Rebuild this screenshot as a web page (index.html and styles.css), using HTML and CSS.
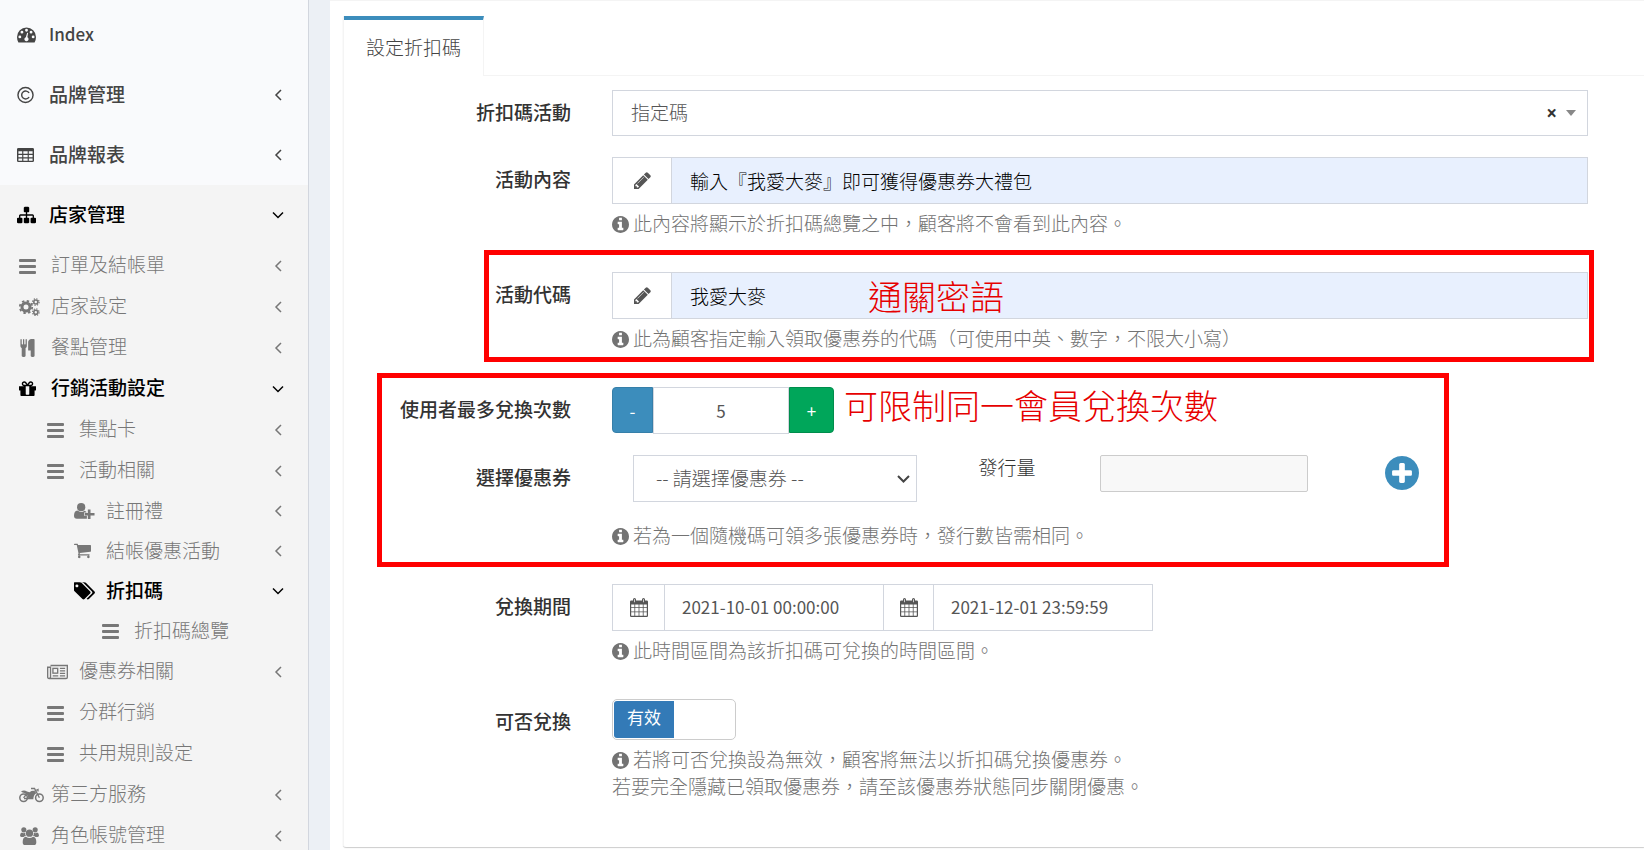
FILE: index.html
```
<!DOCTYPE html>
<html lang="zh-Hant">
  <head>
    <meta charset="UTF-8" />
    <meta name="viewport" content="width=device-width, initial-scale=1.0" />
    <title>設定折扣碼</title>
    <link rel="stylesheet" href="styles.css">
  </head>
  <body>
    <!-- icon sprite -->
    <svg class="sprite" aria-hidden="true">
      <symbol id="i-dashboard" viewBox="0 1 20 17">
        <path fill-rule="evenodd" d="M10 1.500A10 10 0 0 0 0 11.500Q0 14.500 1.500 17.500H18.500Q20 14.500 20 11.500A10 10 0 0 0 10 1.500ZM3 10a1.500 1.500 0 1 1 0 3a1.500 1.500 0 1 1 0-3ZM5.200 5a1.500 1.500 0 1 1 0 3a1.500 1.500 0 1 1 0-3ZM10 3a1.500 1.500 0 1 1 0 3a1.500 1.500 0 1 1 0-3ZM14.800 5a1.500 1.500 0 1 1 0 3a1.500 1.500 0 1 1 0-3ZM17 10a1.500 1.500 0 1 1 0 3a1.500 1.500 0 1 1 0-3ZM10.700 7.200L11.700 7.500L10.900 11.900A2.200 2.200 0 1 1 9.300 11.800Z"/>
      </symbol>
      <symbol id="i-copyright" viewBox="0 0 18 18">
        <g fill="none" stroke="currentColor" stroke-width="1.500"><circle cx="9" cy="9" r="8"/><path d="M12.800 6.900A4.200 4.200 0 1 0 12.800 11.100"/></g>
      </symbol>
      <symbol id="i-table" viewBox="0 0 18 18">
        <path fill-rule="evenodd" d="M1.500 1.500H16.500Q18 1.500 18 3V15Q18 16.500 16.500 16.500H1.500Q0 16.500 0 15V3Q0 1.500 1.500 1.500ZM1.500 5V7.700H5.500V5ZM6.700 5V7.700H11.300V5ZM12.500 5V7.700H16.500V5ZM1.500 8.900V11.400H5.500V8.900ZM6.700 8.900V11.400H11.300V8.900ZM12.500 8.900V11.400H16.500V8.900ZM1.500 12.600V15.100H5.500V12.600ZM6.700 12.600V15.100H11.300V12.600ZM12.500 12.600V15.100H16.500V12.600Z"/>
      </symbol>
      <symbol id="i-sitemap" viewBox="0 64 1792 1664">
        <path d="M1792 1248v320q0 40-28 68t-68 28h-320q-40 0-68-28t-28-68v-320q0-40 28-68t68-28h96v-192h-512v192h96q40 0 68 28t28 68v320q0 40-28 68t-68 28h-320q-40 0-68-28t-28-68v-320q0-40 28-68t68-28h96v-192h-512v192h96q40 0 68 28t28 68v320q0 40-28 68t-68 28h-320q-40 0-68-28t-28-68v-320q0-40 28-68t68-28h96v-192q0-52 38-90t90-38h512v-192h-96q-40 0-68-28t-28-68v-320q0-40 28-68t68-28h320q40 0 68 28t28 68v320q0 40-28 68t-68 28h-96v192h512q52 0 90 38t38 90v192h96q40 0 68 28t28 68z"/>
      </symbol>
      <symbol id="i-bars" viewBox="0 0 17 18">
        <rect y="2" width="17" height="3" rx="1"/><rect y="8" width="17" height="3" rx="1"/><rect y="14" width="17" height="3" rx="1"/>
      </symbol>
      <symbol id="i-cogs" viewBox="0 0 21 18">
        <g fill="none" stroke="currentColor">
          <circle cx="7" cy="9" r="4" stroke-width="3"/><circle cx="7" cy="9" r="6.200" stroke-width="1.800" stroke-dasharray="2.435"/>
          <circle cx="16.800" cy="4" r="2" stroke-width="1.600"/><circle cx="16.800" cy="4" r="3.300" stroke-width="1.200" stroke-dasharray="1.300"/>
          <circle cx="16.800" cy="14.200" r="2" stroke-width="1.600"/><circle cx="16.800" cy="14.200" r="3.300" stroke-width="1.200" stroke-dasharray="1.300"/>
        </g>
      </symbol>
      <symbol id="i-cutlery" viewBox="192 0 1408 1792">
        <path d="M832 64v640q0 61-35.500 111t-92.500 70v779q0 52-38 90t-90 38h-128q-52 0-90-38t-38-90v-779q-57-20-92.500-70t-35.500-111v-640q0-26 19-45t45-19 45 19 19 45v416q0 26 19 45t45 19 45-19 19-45v-416q0-26 19-45t45-19 45 19 19 45v416q0 26 19 45t45 19 45-19 19-45v-416q0-26 19-45t45-19 45 19 19 45zm768 0v1600q0 52-38 90t-90 38h-128q-52 0-90-38t-38-90v-512h-224q-13 0-22.500-9.500t-9.500-22.500v-800q0-132 94-226t226-94h256q26 0 45 19t19 45z"/>
      </symbol>
      <symbol id="i-gift" viewBox="128 128 1536 1536">
        <path d="M1056 1356v-716h-320v716q0 25 18 38.500t46 13.500h192q28 0 46-13.500t18-38.500zm-456-844h195l-126-161q-26-31-69-31-40 0-68 28t-28 68 28 68 68 28zm688-96q0-40-28-68t-68-28q-43 0-69 31l-125 161h194q40 0 68-28t28-68zm376 256v320q0 14-9 23t-23 9h-96v416q0 40-28 68t-68 28h-1088q-40 0-68-28t-28-68v-416h-96q-14 0-23-9t-9-23v-320q0-14 9-23t23-9h440q-93 0-158.500-65.500t-65.500-158.500 65.500-158.500 158.500-65.500q107 0 168 77l128 165 128-165q61-77 168-77 93 0 158.500 65.500t65.500 158.500-65.500 158.500-158.500 65.500h440q14 0 23 9t9 23z"/>
      </symbol>
      <symbol id="i-user-plus" viewBox="0 0 22 18">
        <circle cx="7.500" cy="5" r="4.300"/><path d="M3.500 8.500Q7.500 11.500 11 8.700Q12 8.800 12.500 9.700H13V10.500H10.500V14H13.500V17H3Q0 17 0 14Q0 9 3.500 8.500Z"/><path d="M14.500 7.500H17.300V11H21.500V13.700H17.300V17.500H14.500V13.700H11.200V11H14.500Z"/>
      </symbol>
      <symbol id="i-cart" viewBox="64 192 1664 1536">
        <path d="M704 1536q0 52-38 90t-90 38-90-38-38-90 38-90 90-38 90 38 38 90zm896 0q0 52-38 90t-90 38-90-38-38-90 38-90 90-38 90 38 38 90zm128-1088v512q0 24-16.500 42.500t-40.500 21.500l-1044 122q13 60 13 70 0 16-24 64h920q26 0 45 19t19 45-19 45-45 19h-1024q-26 0-45-19t-19-45q0-11 8-31.500t16-36 21.500-40 15.500-29.500l-177-823h-204q-26 0-45-19t-19-45 19-45 45-19h256q16 0 28.500 6.500t19.500 15.500 13 24.500 8 26 5.500 29.500 4.500 26h1201q26 0 45 19t19 45z"/>
      </symbol>
      <symbol id="i-tags" viewBox="0 128 1840 1536">
        <path d="M384 448q0-53-37.500-90.500t-90.500-37.500-90.500 37.500-37.500 90.500 37.500 90.500 90.500 37.500 90.500-37.500 37.500-90.500zm1067 576q0 53-37 90l-491 492q-39 37-91 37-53 0-90-37l-715-716q-38-37-64.500-101t-26.500-117v-416q0-52 38-90t90-38h416q53 0 117 26.500t102 64.500l715 714q37 39 37 91zm384 0q0 53-37 90l-491 492q-39 37-91 37-36 0-59-14t-53-45l470-470q37-37 37-90 0-52-37-91l-715-714q-38-38-102-64.500t-117-26.500h224q53 0 117 26.500t102 64.500l715 714q37 39 37 91z"/>
      </symbol>
      <symbol id="i-newspaper" viewBox="0 0 22 18">
        <g fill="none" stroke="currentColor" stroke-width="1.400"><path d="M3.700 2.200H21.300V14.500Q21.300 15.800 20 15.800H2.200Q.7 15.800 .7 14.200V4H3.700V14.200Q3.700 15.500 2.200 15.800"/><rect x="6.200" y="5.200" width="5" height="5"/><path d="M6 13H11.800M13.500 5.200H19M13.500 7.800H19M13.500 10.400H19M13.500 13H19"/></g>
      </symbol>
      <symbol id="i-motorcycle" viewBox="0 0 25 18">
        <g fill="none" stroke="currentColor"><circle cx="4.600" cy="11.800" r="3.800" stroke-width="1.500"/><circle cx="20.400" cy="11.800" r="3.800" stroke-width="1.500"/><path stroke-width="1.300" d="M4.600 11.800L7.500 8M12 2.500H15.500L20.400 11.800M15.500 5L19 3.500V5.500"/></g>
        <path d="M2 5.500Q5 3.700 8 5.500L10.500 6.200Q14 3.700 16.300 5.500L17.200 7.300Q14.500 9 14.300 13.300H5V11.700H9.300Q8.700 8.300 5.500 7Q3.500 6.500 2 5.500Z"/>
      </symbol>
      <symbol id="i-users" viewBox="0 0 20 19">
        <circle cx="4" cy="3" r="2.700"/><circle cx="16" cy="3" r="2.700"/><circle cx="10" cy="6.500" r="3.900"/>
        <path d="M2 5.700Q3.500 7 5.300 6.200Q5.200 8 6.200 9.400Q4.500 9.500 3.700 10.500H1.500Q0 10.500 0 9Q0 6 2 5.700ZM18 5.700Q16.500 7 14.700 6.200Q14.800 8 13.800 9.400Q15.500 9.500 16.300 10.500H18.500Q20 10.500 20 9Q20 6 18 5.700ZM6.200 10.200Q10 13 13.800 10.200Q17.200 10.500 17.200 16Q17.200 19 14.500 19H5.500Q2.800 19 2.800 16Q2.800 10.500 6.200 10.200Z"/>
      </symbol>
      <symbol id="i-pencil" viewBox="128 128 1536 1536">
        <path d="M491 1536l91-91-235-235-91 91v107h128v128h107zm523-928q0-22-22-22-10 0-17 7l-542 542q-7 7-7 17 0 22 22 22 10 0 17-7l542-542q7-7 7-17zm-54-192l416 416-832 832h-416v-416zm683 96q0 53-37 90l-166 166-416-416 166-165q36-38 90-38 53 0 91 38l235 234q37 39 37 91z"/>
      </symbol>
      <symbol id="i-info" viewBox="128 128 1536 1536">
        <path d="M1152 1376v-160q0-14-9-23t-23-9h-96v-512q0-14-9-23t-23-9h-320q-14 0-23 9t-9 23v160q0 14 9 23t23 9h96v320h-96q-14 0-23 9t-9 23v160q0 14 9 23t23 9h448q14 0 23-9t9-23zm-128-896v-160q0-14-9-23t-23-9h-192q-14 0-23 9t-9 23v160q0 14 9 23t23 9h192q14 0 23-9t9-23zm640 416q0 209-103 385.500t-279.500 279.500-385.500 103-385.500-103-279.500-279.500-103-385.500 103-385.500 279.500-279.500 385.500-103 385.500 103 279.500 279.500 103 385.500z"/>
      </symbol>
      <symbol id="i-plus-circle" viewBox="128 128 1536 1536">
        <path d="M1344 960v-128q0-26-19-45t-45-19h-256v-256q0-26-19-45t-45-19h-128q-26 0-45 19t-19 45v256h-256q-26 0-45 19t-19 45v128q0 26 19 45t45 19h256v256q0 26 19 45t45 19h128q26 0 45-19t19-45v-256h256q26 0 45-19t19-45zm320-64q0 209-103 385.500t-279.500 279.500-385.500 103-385.500-103-279.500-279.500-103-385.500 103-385.500 279.500-279.500 385.500-103 385.500 103 279.500 279.500 103 385.500z"/>
      </symbol>
      <symbol id="i-calendar" viewBox="0 0 18 19">
        <path fill-rule="evenodd" d="M1.200 2.500H3V1.500Q3 0 4.500 0Q6 0 6 1.500V2.500H12V1.500Q12 0 13.500 0Q15 0 15 1.500V2.500H16.800Q18 2.500 18 3.700V17.800Q18 19 16.800 19H1.200Q0 19 0 17.800V3.700Q0 2.500 1.200 2.500ZM1.200 6.500V9.200H4.400V6.500ZM5.200 6.500V9.200H8.600V6.500ZM9.400 6.500V9.200H12.800V6.500ZM13.600 6.500V9.200H16.800V6.500ZM1.200 10V13.500H4.400V10ZM5.200 10V13.500H8.600V10ZM9.400 10V13.500H12.800V10ZM13.600 10V13.500H16.800V10ZM1.200 14.300V17.800H4.400V14.300ZM5.200 14.300V17.800H8.600V14.300ZM9.400 14.300V17.800H12.800V14.300ZM13.600 14.300V17.800H16.800V14.300ZM4.200 1.300V4.300H4.900V1.300ZM13.200 1.300V4.300H13.900V1.300Z"/>
      </symbol>
      <symbol id="i-left" viewBox="0 0 10 12"><path fill="none" stroke="currentColor" stroke-width="1.500" d="M8 1L3 6L8 11"/></symbol>
      <symbol id="i-down" viewBox="0 0 12 12"><path fill="none" stroke="currentColor" stroke-width="1.500" d="M1 3.500L6 8.500L11 3.500"/></symbol>
      <symbol id="i-select" viewBox="0 0 13 13"><path fill="none" stroke="currentColor" stroke-width="2" d="M1 4L6.500 9.500L12 4"/></symbol>
    </svg>

    <div class="wrapper">
      <aside class="sidebar">
        <ul class="menu">
          <li><a href="#" class="home"><svg class="icon w19"><use href="#i-dashboard"/></svg><span>Index</span></a></li>
          <li><a href="#"><svg class="icon"><use href="#i-copyright"/></svg><span>品牌管理</span><svg class="arrow"><use href="#i-left"/></svg></a></li>
          <li><a href="#"><svg class="icon"><use href="#i-table"/></svg><span>品牌報表</span><svg class="arrow"><use href="#i-left"/></svg></a></li>
          <li class="active">
            <a href="#"><svg class="icon w19"><use href="#i-sitemap"/></svg><span>店家管理</span><svg class="arrow"><use href="#i-down"/></svg></a>
            <ul class="submenu">
              <li><a href="#"><svg class="icon"><use href="#i-bars"/></svg><span>訂單及結帳單</span><svg class="arrow"><use href="#i-left"/></svg></a></li>
              <li><a href="#"><svg class="icon w21"><use href="#i-cogs"/></svg><span>店家設定</span><svg class="arrow"><use href="#i-left"/></svg></a></li>
              <li><a href="#"><svg class="icon"><use href="#i-cutlery"/></svg><span>餐點管理</span><svg class="arrow"><use href="#i-left"/></svg></a></li>
              <li class="active">
                <a href="#"><svg class="icon"><use href="#i-gift"/></svg><span>行銷活動設定</span><svg class="arrow"><use href="#i-down"/></svg></a>
                <ul class="submenu">
                  <li><a href="#"><svg class="icon"><use href="#i-bars"/></svg><span>集點卡</span><svg class="arrow"><use href="#i-left"/></svg></a></li>
                  <li>
                    <a href="#"><svg class="icon"><use href="#i-bars"/></svg><span>活動相關</span><svg class="arrow"><use href="#i-left"/></svg></a>
                    <ul class="submenu deep">
                      <li><a href="#"><svg class="icon w21"><use href="#i-user-plus"/></svg><span>註冊禮</span><svg class="arrow"><use href="#i-left"/></svg></a></li>
                      <li><a href="#"><svg class="icon"><use href="#i-cart"/></svg><span>結帳優惠活動</span><svg class="arrow"><use href="#i-left"/></svg></a></li>
                      <li class="active">
                        <a href="#"><svg class="icon w21"><use href="#i-tags"/></svg><span>折扣碼</span><svg class="arrow"><use href="#i-down"/></svg></a>
                        <ul class="submenu">
                          <li><a href="#"><svg class="icon"><use href="#i-bars"/></svg><span>折扣碼總覽</span></a></li>
                        </ul>
                      </li>
                    </ul>
                  </li>
                  <li><a href="#"><svg class="icon w21"><use href="#i-newspaper"/></svg><span>優惠券相關</span><svg class="arrow"><use href="#i-left"/></svg></a></li>
                  <li><a href="#"><svg class="icon"><use href="#i-bars"/></svg><span>分群行銷</span></a></li>
                  <li><a href="#"><svg class="icon"><use href="#i-bars"/></svg><span>共用規則設定</span></a></li>
                </ul>
              </li>
              <li><a href="#"><svg class="icon w25"><use href="#i-motorcycle"/></svg><span>第三方服務</span><svg class="arrow"><use href="#i-left"/></svg></a></li>
              <li><a href="#"><svg class="icon w21"><use href="#i-users"/></svg><span>角色帳號管理</span><svg class="arrow"><use href="#i-left"/></svg></a></li>
            </ul>
          </li>
        </ul>
      </aside>

      <main class="content">
        <div class="panel">
          <nav class="tabs">
            <a href="#" class="tab">設定折扣碼</a>
          </nav>
          <form class="form">
            <div class="row">
              <label for="type">折扣碼活動</label>
              <div class="field select-clear">
                <select id="type" class="control"><option>指定碼</option></select>
                <button type="button" class="clear" aria-label="清除">×</button>
                <span class="caret"></span>
              </div>
            </div>

            <div class="row">
              <label for="desc">活動內容</label>
              <div class="field">
                <div class="group">
                  <span class="addon"><svg><use href="#i-pencil"/></svg></span>
                  <input type="text" id="desc" class="control filled" value="輸入『我愛大麥』即可獲得優惠券大禮包">
                </div>
                <p class="help"><svg><use href="#i-info"/></svg>此內容將顯示於折扣碼總覽之中，顧客將不會看到此內容。</p>
              </div>
            </div>

            <div class="row">
              <label for="code">活動代碼</label>
              <div class="field">
                <div class="group">
                  <span class="addon"><svg><use href="#i-pencil"/></svg></span>
                  <input type="text" id="code" class="control filled" value="我愛大麥">
                </div>
                <p class="help"><svg><use href="#i-info"/></svg>此為顧客指定輸入領取優惠券的代碼（可使用中英、數字，不限大小寫）</p>
              </div>
              <div class="mark mark-code"></div>
              <span class="note note-code">通關密語</span>
            </div>

            <div class="limits">
              <div class="row">
                <label for="times">使用者最多兌換次數</label>
                <div class="field stepper">
                  <button type="button" class="minus">-</button>
                  <input type="text" id="times" class="control" value="5">
                  <button type="button" class="plus">+</button>
                </div>
              </div>
              <div class="row">
                <label for="coupon">選擇優惠券</label>
                <div class="field">
                  <div class="coupon">
                    <div class="coupon-select">
                      <select id="coupon" class="control"><option>-- 請選擇優惠券 --</option></select>
                      <svg><use href="#i-select"/></svg>
                    </div>
                    <label for="amount">發行量</label>
                    <input type="text" id="amount" class="amount" disabled>
                    <button type="button" class="add" aria-label="新增"><svg><use href="#i-plus-circle"/></svg></button>
                  </div>
                  <p class="help"><svg><use href="#i-info"/></svg>若為一個隨機碼可領多張優惠券時，發行數皆需相同。</p>
                </div>
              </div>
              <div class="mark mark-limits"></div>
              <span class="note note-limits">可限制同一會員兌換次數</span>
            </div>

            <div class="row">
              <label for="start">兌換期間</label>
              <div class="field">
                <div class="group dates">
                  <span class="addon"><svg><use href="#i-calendar"/></svg></span>
                  <input type="text" id="start" class="control" value="2021-10-01 00:00:00">
                  <span class="addon"><svg><use href="#i-calendar"/></svg></span>
                  <input type="text" class="control" aria-label="結束時間" value="2021-12-01 23:59:59">
                </div>
                <p class="help"><svg><use href="#i-info"/></svg>此時間區間為該折扣碼可兌換的時間區間。</p>
              </div>
            </div>

            <div class="row">
              <label for="enabled">可否兌換</label>
              <div class="field">
                <label class="toggle"><input type="checkbox" id="enabled" checked><span>有效</span></label>
                <p class="help"><svg><use href="#i-info"/></svg>若將可否兌換設為無效，顧客將無法以折扣碼兌換優惠券。<br>若要完全隱藏已領取優惠券，請至該優惠券狀態同步關閉優惠。</p>
              </div>
            </div>
          </form>
        </div>
      </main>
    </div>
  </body>
</html>
```
FILE: styles.css
```
* {
  box-sizing: border-box;
}
body {
  margin: 0;
  font-family: "Noto Sans CJK TC", sans-serif;
  font-size: 19px;
  font-weight: 300;
  line-height: 27px;
  color: #333;
  background-color: #ecf0f5;
}
input, select, button {
  font: inherit;
  margin: 0;
}
svg {
  fill: currentColor;
}
.sprite {
  display: none;
}
.wrapper {
  display: flex;
  height: 100vh;
  overflow: hidden;
}

/* sidebar */
.sidebar {
  flex: none;
  width: 309px;
  padding-top: 5px;
  background-color: #f9fafc;
  border-right: 1px solid #d2d6de;
  overflow: hidden;
}
.menu, .submenu {
  list-style: none;
  margin: 0;
  padding: 0;
}
.menu a {
  display: flex;
  align-items: center;
  height: 60px;
  padding: 0 24px 0 17px;
  color: #444;
  font-weight: 500;
  text-decoration: none;
}
.menu a span {
  padding-bottom: 4px;
}
.menu .home {
  font-size: 17px;
}
.menu > li.active {
  background-color: #f4f4f4;
}
.menu .submenu a {
  height: 41px;
  padding-left: 19px;
  color: #777;
  font-weight: 300;
}
.menu .submenu .submenu a {
  padding-left: 47px;
}
.menu .submenu .deep a {
  height: 40px;
  padding-left: 74px;
}
.menu .submenu .deep .submenu a {
  padding-left: 102px;
}
.menu li.active > a,
.menu .submenu li.active > a {
  color: #000;
  font-weight: 500;
}
.icon {
  flex: none;
  width: 17px;
  height: 18px;
  margin-right: 15px;
}
.icon.w19 {
  width: 19px;
  margin-right: 13px;
}
.icon.w21 {
  width: 21px;
  margin-right: 11px;
}
.icon.w25 {
  width: 25px;
  margin-right: 7px;
}
.arrow {
  width: 12px;
  height: 12px;
  margin-left: auto;
}

/* content */
.content {
  flex: 1;
  min-width: 0;
  margin-left: 21px;
  padding: 15px 0 0 13px;
  background-color: #fff;
  border-top: 1px solid #f4f4f4;
}
.panel {
  border-left: 1px solid #f4f4f4;
  border-bottom-left-radius: 3px;
  box-shadow: 0 1px 1px rgba(0, 0, 0, 0.2);
}
.tabs {
  display: flex;
  border-bottom: 1px solid #f4f4f4;
}
.tab {
  width: 140px;
  height: 60px;
  margin-bottom: -1px;
  padding-top: 13px;
  border-top: 4px solid #3c8dbc;
  border-right: 1px solid #f4f4f4;
  background-color: #fff;
  color: #444;
  text-align: center;
  text-decoration: none;
}
.form {
  padding: 14px 0 12px;
}
.row {
  position: relative;
  display: flex;
  gap: 41px;
  padding-right: 56px;
  margin-bottom: 21px;
}
.row > label {
  flex: none;
  width: 227px;
  line-height: 43px;
  font-weight: 500;
  text-align: right;
}
.field {
  flex: 1;
  min-width: 0;
}
.control {
  display: block;
  width: 100%;
  height: 47px;
  padding: 0 18px;
  border: 1px solid #d2d6de;
  border-radius: 0;
  background-color: #fff;
  color: #555;
  appearance: none;
}
.control.filled {
  background-color: #e8f0fe;
  color: #000;
}
.help {
  margin: 5px 0 15px;
  color: #737373;
}
.help svg {
  width: 17px;
  height: 17px;
  margin-right: 4px;
  vertical-align: -2px;
}

.select-clear {
  position: relative;
}
.select-clear .control {
  height: 46px;
  padding: 0 18px 3px;
}
.clear {
  position: absolute;
  top: 10px;
  right: 31px;
  padding: 0;
  border: 0;
  background: none;
  color: #333;
  font-family: "Open Sans", sans-serif;
  font-size: 19px;
  font-weight: 700;
}
.caret {
  position: absolute;
  top: 20px;
  right: 12px;
  border: 5px solid transparent;
  border-top: 6px solid #888;
  border-bottom: 0;
}

.group {
  display: flex;
}
.addon {
  flex: none;
  display: flex;
  align-items: center;
  justify-content: center;
  width: 59px;
  border: 1px solid #d2d6de;
  border-right: 0;
  color: #555;
}
.addon svg {
  width: 17px;
  height: 17px;
}
.dates {
  width: 541px;
}
.dates .addon {
  width: 52px;
}
.dates .addon ~ .addon {
  width: 49px;
  border-left: 0;
}
.dates .addon svg {
  width: 18px;
  height: 19px;
}
.dates .control {
  padding: 0 17px 2px;
  font-size: 17px;
  font-weight: 400;
}

.stepper {
  display: flex;
}
.stepper .control {
  width: 136px;
  font-size: 17px;
  font-weight: 400;
  text-align: center;
}
.stepper button {
  height: 46px;
  padding: 0;
  color: #fff;
  font-size: 17px;
  font-weight: 400;
}
.stepper .minus {
  width: 41px;
  border: 1px solid #367fa9;
  border-radius: 4px 0 0 4px;
  background-color: #3c8dbc;
}
.stepper .plus {
  width: 45px;
  border: 1px solid #008d4c;
  border-radius: 0 4px 4px 0;
  background-color: #00a65a;
}

.coupon {
  display: grid;
  grid-template-columns: 17fr 6fr 14fr 10fr;
  align-items: start;
  padding-left: 21px;
  margin-bottom: 19px;
}
.coupon > label {
  line-height: 23px;
}
.coupon-select {
  position: relative;
  width: 284px;
}
.coupon-select .control {
  padding: 0 22px 2px;
}
.coupon-select svg {
  position: absolute;
  top: 17px;
  right: 7px;
  width: 13px;
  height: 13px;
  color: #444;
}
.amount {
  width: 208px;
  height: 37px;
  border: 1px solid #ccc;
  border-radius: 2px;
  background-color: #f8f8f8;
}
.add {
  width: 34px;
  height: 36px;
  padding: 0;
  border: 0;
  background: none;
  color: #3c8dbc;
}
.add svg {
  display: block;
  width: 34px;
  height: 34px;
}

.toggle {
  display: flex;
  width: 124px;
  height: 41px;
  padding: 1px;
  border: 1px solid #ccc;
  border-radius: 5px;
}
.toggle input {
  position: absolute;
  opacity: 0;
}
.toggle span {
  width: 60px;
  border-radius: 3px 0 0 3px;
  background-color: #337ab7;
  color: #fff;
  font-size: 17px;
  font-weight: 400;
  line-height: 31px;
  text-align: center;
}

/* red annotations */
.limits {
  position: relative;
}
.mark {
  position: absolute;
  border: 5px solid #f00;
  pointer-events: none;
}
.mark-code {
  top: -22px;
  right: 50px;
  bottom: 4px;
  left: 140px;
}
.mark-limits {
  top: -14px;
  right: 195px;
  bottom: -4px;
  left: 33px;
}
.note {
  position: absolute;
  color: #e60000;
  font-size: 34px;
  line-height: 40px;
  pointer-events: none;
}
.note-code {
  top: 4px;
  left: 524px;
}
.note-limits {
  top: -2px;
  left: 500px;
}
```
